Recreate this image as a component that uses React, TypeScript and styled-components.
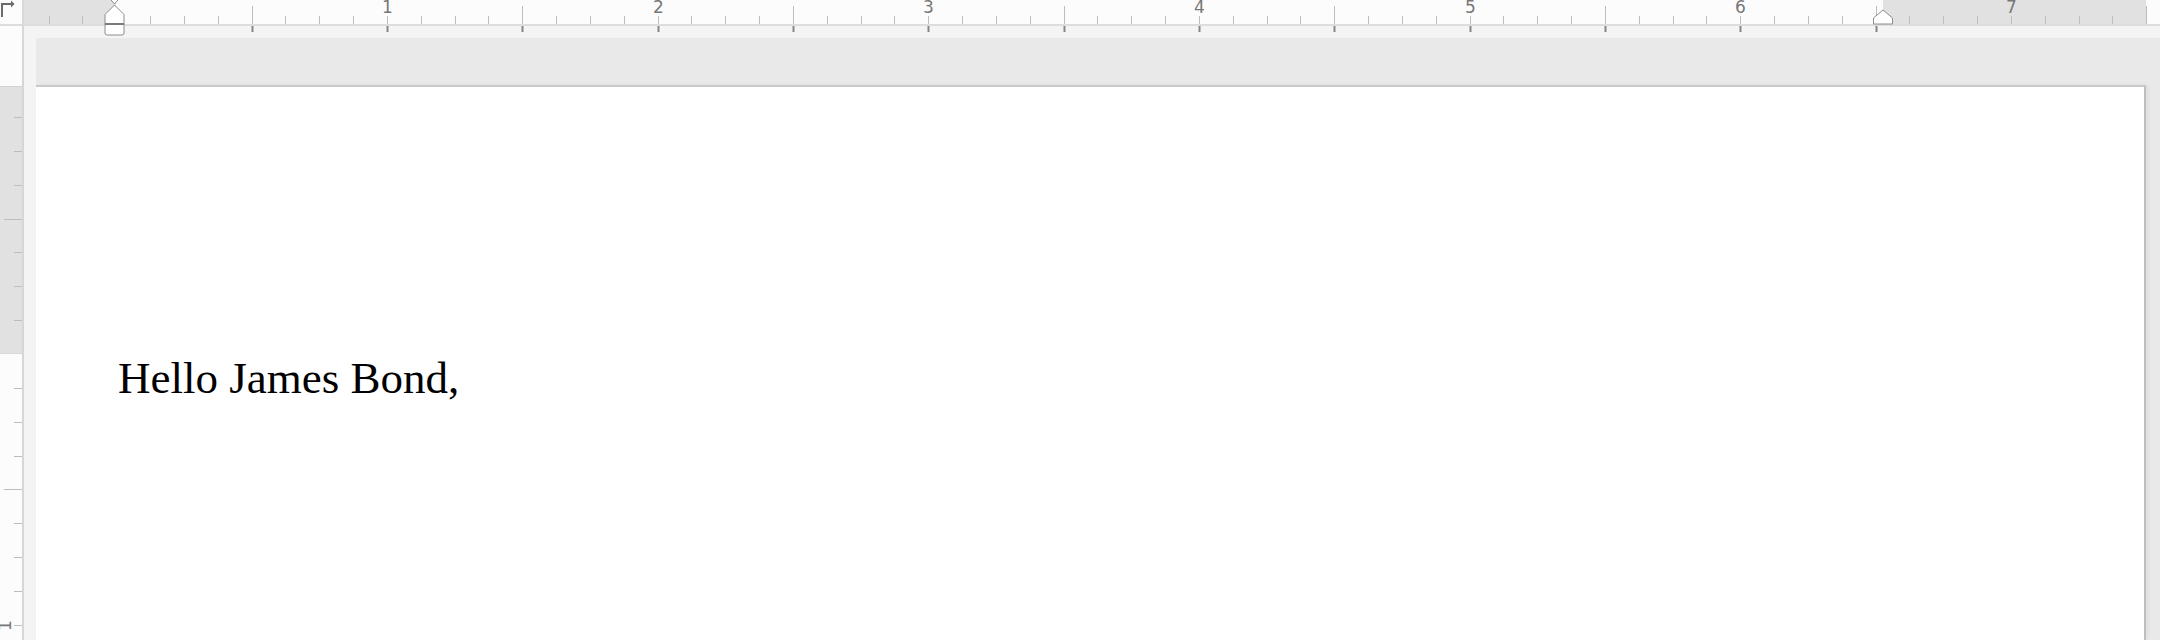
import React from 'react';
import styled, { createGlobalStyle } from 'styled-components';

const INCH = 270.67;
const EIGHTH = INCH / 8;
const H_ORIGIN = 116.3; // left margin on the page, in screen px
const V_ORIGIN = 354; // top margin on the page
const RULER_LEFT = 24;
const TOP_ROW = 38;
const RIGHT_MARGIN = 1883;
const PAGE_RIGHT = 2146;

const hSteps = Array.from({ length: 63 }, (_, i) => i - 2).filter((k) => k !== 0);
const vSteps = Array.from({ length: 16 }, (_, i) => i - 7).filter((k) => k !== 0);

const HorizontalRuler = () => {
  const left = Math.round(H_ORIGIN) - RULER_LEFT;
  const right = RIGHT_MARGIN - RULER_LEFT;
  const end = PAGE_RIGHT - RULER_LEFT;
  const ix = 114.5 - RULER_LEFT;
  const rx = RIGHT_MARGIN - RULER_LEFT;

  return (
    <svg width={2136} height={TOP_ROW}>
      <rect x={0} y={0} width={2136} height={24} fill="#fcfcfc" />
      <rect x={0} y={0} width={left} height={24} fill="#e1e1e1" />
      <rect x={right} y={0} width={end - right} height={24} fill="#e1e1e1" />
      <rect x={0} y={24} width={2136} height={2} fill="#dddddd" />

      {hSteps.map((k) => {
        const x = Math.round(H_ORIGIN + k * EIGHTH) - RULER_LEFT;
        const inch = k % 8 === 0;
        const half = !inch && k % 4 === 0;
        const below = k % 4 === 0 && k > 0 && k <= 52;
        return (
          <g key={k}>
            {inch && (
              <text
                x={x + 0.5}
                y={12.5}
                textAnchor="middle"
                fontFamily="'DejaVu Sans', sans-serif"
                fontSize={17}
                fill="#777777"
              >
                {k / 8}
              </text>
            )}
            <rect
              x={x}
              y={half ? 6 : 16}
              width={1}
              height={half ? 18 : 8}
              fill="#bdbdbd"
            />
            {below && <rect x={x - 0.5} y={26} width={2} height={6} fill="#858585" />}
          </g>
        );
      })}

      {/* left indent markers */}
      <polygon
        points={`${ix - 6},-3 ${ix + 6},-3 ${ix},4`}
        fill="#ffffff"
        stroke="#8c8c8c"
        strokeWidth={1}
      />
      <polygon
        points={`${ix},5 ${ix + 9.5},14.5 ${ix + 9.5},24 ${ix - 9.5},24 ${ix - 9.5},14.5`}
        fill="#ffffff"
        stroke="#8c8c8c"
        strokeWidth={1}
      />
      <path
        d={`M${ix - 9.5} 24 H${ix + 9.5} V33 Q${ix + 9.5} 35 ${ix + 7.5} 35 H${ix - 7.5} Q${ix - 9.5} 35 ${ix - 9.5} 33 Z`}
        fill="#ffffff"
        stroke="#8c8c8c"
        strokeWidth={1}
      />
      <rect x={ix - 9.5} y={23} width={19} height={2} fill="#7a7a7a" />

      {/* right indent marker */}
      <polygon
        points={`${rx},10 ${rx + 9.5},18 ${rx + 9.5},24 ${rx - 9.5},24 ${rx - 9.5},18`}
        fill="#ffffff"
        stroke="#8c8c8c"
        strokeWidth={1}
      />
    </svg>
  );
};

const VerticalRuler = () => {
  const top = 86 - TOP_ROW;
  const bottom = 353 - TOP_ROW;
  return (
    <svg width={22} height={640 - TOP_ROW}>
      <rect x={0} y={0} width={22} height={640} fill="#fcfcfc" />
      <rect x={0} y={top} width={22} height={bottom - top} fill="#e1e1e1" />
      <rect x={0} y={top} width={22} height={1} fill="#d2d2d2" />
      <rect x={0} y={bottom} width={22} height={1} fill="#d8d8d8" />
      {vSteps.map((k) => {
        const y = Math.round(V_ORIGIN + k * EIGHTH) - TOP_ROW;
        if (y < top + 4) return null;
        const inch = k % 8 === 0;
        const half = !inch && k % 4 === 0;
        return (
          <g key={k}>
            {inch && (
              <text
                transform={`translate(10.5, ${y + 0.5}) rotate(-90)`}
                textAnchor="middle"
                fontFamily="'DejaVu Sans', sans-serif"
                fontSize={17}
                fill="#777777"
              >
                {k / 8}
              </text>
            )}
            <rect x={half ? 4 : 14} y={y} width={half ? 18 : 8} height={1} fill="#bdbdbd" />
          </g>
        );
      })}
    </svg>
  );
};

const TabStopIcon = () => (
  <svg width={16} height={18}>
    <path d="M2 17 V4 H11" stroke="#6a6a6a" strokeWidth={2} fill="none" />
    <polygon points="11,0.5 14.5,4 11,7.5" fill="#6a6a6a" />
  </svg>
);

const App = () => {
  return (
    <>
      <GlobalStyle />
      <Screen>
        <TopRow>
          <Corner>
            <CornerTab>
              <TabStopIcon />
            </CornerTab>
          </Corner>
          <RulerStrip>
            <HorizontalRuler />
          </RulerStrip>
        </TopRow>
        <Body>
          <SideRuler>
            <VerticalRuler />
          </SideRuler>
          <DocArea>
            <Canvas>
              <Page>
                <Greeting>Hello James Bond,</Greeting>
              </Page>
            </Canvas>
          </DocArea>
        </Body>
      </Screen>
    </>
  );
};

export default App;

const GlobalStyle = createGlobalStyle`
  html, body {
    margin: 0;
    padding: 0;
    background: #f4f4f4;
    overflow: hidden;
  }
`;

const Screen = styled.div`
  width: 2160px;
  height: 640px;
  display: flex;
  flex-direction: column;
  overflow: hidden;
`;

const TopRow = styled.div`
  display: flex;
  height: ${TOP_ROW}px;
  flex-shrink: 0;
`;

const Corner = styled.div`
  width: 22px;
  border-right: 2px solid #d9d9d9;
  background: #fcfcfc;
  display: flex;
  flex-direction: column;
`;

const CornerTab = styled.div`
  height: 24px;
  border-bottom: 2px solid #dddddd;
  svg {
    display: block;
  }
`;

const RulerStrip = styled.div`
  flex: 1;
  background: #f4f4f4;
  svg {
    display: block;
  }
`;

const Body = styled.div`
  flex: 1;
  display: flex;
  min-height: 0;
`;

const SideRuler = styled.div`
  width: 22px;
  border-right: 2px solid #d6d6d6;
  background: #fcfcfc;
  svg {
    display: block;
  }
`;

const DocArea = styled.div`
  flex: 1;
  display: flex;
  background: #f4f4f4;
  padding-left: 12px;
`;

const Canvas = styled.div`
  flex: 1;
  display: flex;
  background: #e9e9e9;
  padding: 47px 14px 0 0;
`;

const Page = styled.div`
  flex: 1;
  background: #ffffff;
  border-top: 2px solid #c9c9c9;
  border-right: 2px solid #bfbfbf;
  box-shadow: 2px 0 4px rgba(0, 0, 0, 0.05);
  padding: 265px 0 0 82px;
`;

const Greeting = styled.p`
  margin: 0;
  font-family: 'Liberation Serif', 'Times New Roman', serif;
  font-size: 45px;
  line-height: normal;
  color: #000000;
`;
